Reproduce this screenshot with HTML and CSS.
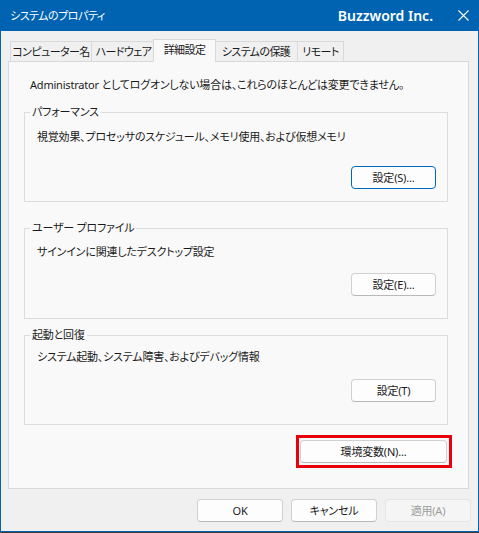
FILE: index.html
```html
<!DOCTYPE html>
<html lang="ja">
<head>
  <meta charset="UTF-8">
  <title>システムのプロパティ</title>
  <link rel="stylesheet" href="styles.css">
</head>
<body>
  <div class="window">
    <div class="titlebar">
      <span class="title-text">システムのプロパティ</span>
      <span class="brand">Buzzword Inc.</span>
      <span class="close">
        <svg width="11" height="11" viewBox="0 0 11 11"><path d="M0.5 0.5L10.5 10.5M10.5 0.5L0.5 10.5" stroke="#fff" stroke-width="1.1"/></svg>
      </span>
    </div>

    <div class="tabs">
      <div class="tab tab-name">コンピューター名</div>
      <div class="tab tab-hw">ハードウェア</div>
      <div class="tab tab-adv active">詳細設定</div>
      <div class="tab tab-prot">システムの保護</div>
      <div class="tab tab-remote">リモート</div>
    </div>

    <div class="panel">
      <p class="intro">Administrator としてログオンしない場合は、これらのほとんどは変更できません。</p>

      <fieldset class="group group-perf">
        <legend>パフォーマンス</legend>
        <p class="desc">視覚効果、プロセッサのスケジュール、メモリ使用、および仮想メモリ</p>
        <div class="group-actions">
          <button class="btn default">設定(S)...</button>
        </div>
      </fieldset>

      <fieldset class="group group-profile">
        <legend>ユーザー プロファイル</legend>
        <p class="desc">サインインに関連したデスクトップ設定</p>
        <div class="group-actions">
          <button class="btn">設定(E)...</button>
        </div>
      </fieldset>

      <fieldset class="group group-startup">
        <legend>起動と回復</legend>
        <p class="desc">システム起動、システム障害、およびデバッグ情報</p>
        <div class="group-actions">
          <button class="btn">設定(T)</button>
        </div>
      </fieldset>

      <div class="env-row">
        <span class="highlight">
          <button class="btn env">環境変数(N)...</button>
        </span>
      </div>
    </div>

    <div class="actions">
      <button class="btn">OK</button>
      <button class="btn">キャンセル</button>
      <button class="btn" disabled>適用(A)</button>
    </div>
  </div>
</body>
</html>
```

FILE: styles.css
```css
* {
  box-sizing: border-box;
}

body {
  margin: 0;
  background: #3a3a3a;
  font-family: "Segoe UI", "Noto Sans", "Noto Sans CJK JP", sans-serif;
  font-size: 11px;
  line-height: 16px;
  letter-spacing: -0.2px;
  color: #1a1a1a;
  font-feature-settings: "palt";
}

.window {
  width: 479px;
  height: 532px;
  border: 1px solid #0063b1;
  border-top: none;
  background: #f0f0f0;
  display: flex;
  flex-direction: column;
}

.titlebar {
  height: 31px;
  background: #0063b1;
  color: #fff;
  display: flex;
  align-items: center;
  padding-left: 9px;
}

.title-text {
  flex: 1;
  letter-spacing: -0.5px;
}

.brand {
  font-family: "Noto Sans", sans-serif;
  font-size: 14px;
  font-weight: 600;
  letter-spacing: 0;
  margin-right: 15px;
}

.close {
  width: 30px;
  display: flex;
  justify-content: center;
}

.close svg {
  display: block;
}

/* tabs */
.tabs {
  display: flex;
  align-items: flex-end;
  height: 30px;
  padding-left: 9px;
}

.tab {
  height: 20px;
  border: 1px solid #d9d9d9;
  border-right: none;
  border-bottom: none;
  display: flex;
  align-items: center;
  justify-content: center;
  white-space: nowrap;
  letter-spacing: -0.6px;
}

.tab-name { width: 81px; }
.tab-hw { width: 64px; }
.tab-prot { width: 83px; }

.tab-remote {
  width: 47px;
  border-right: 1px solid #d9d9d9;
}

.tab.active {
  width: 63px;
  height: 23px;
  margin: 0 -2px -1px;
  padding-bottom: 2px;
  border-right: 1px solid #d9d9d9;
  background: #f9f9f9;
  position: relative;
  z-index: 1;
}

.tab.active + .tab {
  border-left: none;
  padding-left: 1px;
}

/* main panel */
.panel {
  height: 428px;
  margin: 0 9px 0 7px;
  border: 1px solid #d9d9d9;
  background: #f9f9f9;
  padding: 15px 20px 0 15px;
}

.intro {
  margin: 0 0 0 6px;
}

.group {
  margin: 0;
  padding: 0;
  min-width: 0;
  border: 1px solid #dcdcdc;
}

.group legend {
  margin-left: 5px;
  padding: 0 2px;
}

.desc {
  margin: 0;
  padding-left: 12px;
}

.group-actions {
  display: flex;
  justify-content: flex-end;
  padding-right: 11px;
}

.group-perf {
  margin-top: 11px;
  padding-bottom: 12px;
}

.group-perf .desc {
  margin-top: 9px;
}

.group-perf .group-actions {
  margin-top: 21px;
}

.group-profile {
  margin-top: 18px;
  padding-bottom: 22px;
}

.group-profile .desc {
  margin-top: 8px;
}

.group-profile .group-actions {
  margin-top: 13px;
}

.group-startup {
  margin-top: 8px;
  padding-bottom: 22px;
}

.group-startup .desc {
  margin-top: 6px;
}

.group-startup .group-actions {
  margin-top: 14px;
}

/* buttons */
.btn {
  width: 85px;
  height: 23px;
  padding: 0;
  font: inherit;
  letter-spacing: inherit;
  color: #1a1a1a;
  background: #fdfdfd;
  border: 1px solid #d0d0d0;
  border-bottom-color: #b8b8b8;
  border-radius: 4px;
}

.btn.default {
  border: 1px solid #0067c0;
}

.btn:disabled {
  color: #9d9d9d;
  background: #f5f5f5;
  border-color: #e5e5e5;
}

.env-row {
  display: flex;
  justify-content: flex-end;
  margin: 10px -4px 0 0;
}

.highlight {
  display: flex;
  padding: 2px 2px 2px 1px;
  border: 3px solid #e8000b;
}

.btn.env {
  width: 147px;
}

.actions {
  display: flex;
  justify-content: flex-end;
  gap: 8px;
  padding: 10px 7px 0 0;
}

.actions .btn {
  width: 86px;
}
```
